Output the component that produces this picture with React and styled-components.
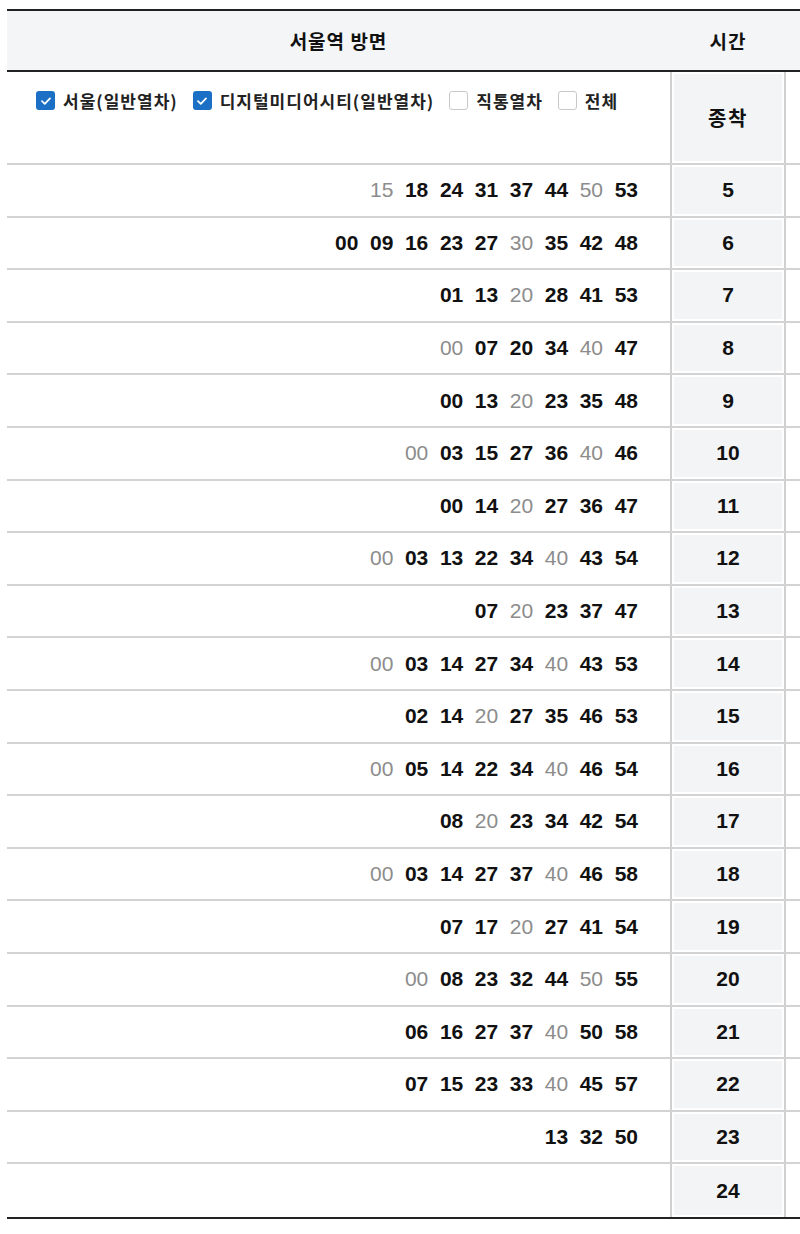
import React from "react";
import styled, { createGlobalStyle } from "styled-components";

const GlobalStyle = createGlobalStyle`
  html, body {
    margin: 0;
    padding: 0;
    background: #fff;
    overflow: hidden;
  }
  body {
    font-family: "Noto Sans CJK KR", "Liberation Sans", sans-serif;
    color: #111;
  }
`;

const COLS = "663px 116px 1fr";

const Table = styled.div`
  width: 1000px;
  margin: 9px 0 0 7px;
  border-top: 2px solid #222;
  border-bottom: 2px solid #222;
`;

const HeadRow = styled.div`
  display: grid;
  grid-template-columns: ${COLS};
  height: 59px;
  background: #f4f5f7;
  border-bottom: 2px solid #222;
`;

const HeadCell = styled.div`
  display: flex;
  align-items: center;
  justify-content: center;
  font-size: 19px;
  font-weight: 700;
  letter-spacing: 1px;
  color: #111;
`;

const Row = styled.div`
  display: grid;
  grid-template-columns: ${COLS};
  box-sizing: border-box;
  height: ${(p) => p.$height}px;
  border-bottom: ${(p) => (p.$last ? "none" : "2px solid #d3d3d3")};
`;

const FilterCell = styled.div`
  display: flex;
  align-items: flex-start;
  gap: 15px;
  padding: 16px 0 0 29px;
`;

const Filter = styled.label`
  display: flex;
  align-items: center;
  gap: 8px;
  font-size: 17px;
  font-weight: 700;
  color: #222;
  letter-spacing: 1px;
`;

const Box = styled.span`
  display: flex;
  align-items: center;
  justify-content: center;
  width: 19px;
  height: 19px;
  box-sizing: border-box;
  border-radius: 3px;
  background: ${(p) => (p.$on ? "#1b6fc4" : "#fff")};
  border: ${(p) => (p.$on ? "none" : "1.5px solid #c9c9c9")};
`;

const Minutes = styled.div`
  display: flex;
  justify-content: flex-end;
  align-items: center;
  gap: 11.6px;
  padding-right: 32px;
  font-family: "Liberation Sans", sans-serif;
  font-size: 21px;
`;

const Min = styled.span`
  font-weight: ${(p) => (p.$dim ? 400 : 700)};
  color: ${(p) => (p.$dim ? "#8c8c8c" : "#111")};
`;

const HourCell = styled.div`
  display: flex;
  align-items: center;
  justify-content: center;
  border-left: 2px solid #d0d0d0;
  border-right: 2px solid #d0d0d0;
  background: #f3f4f6;
  box-shadow: inset 0 0 0 2px #fff;
  font-family: "Liberation Sans", sans-serif;
  font-size: 21px;
  font-weight: 700;
  color: #111;
`;

const HourLabel = styled(HourCell)`
  font-family: "Noto Sans CJK KR", sans-serif;
  font-size: 20px;
  letter-spacing: 1.5px;
`;

const Check = () => (
  <svg width="12" height="12" viewBox="0 0 12 12">
    <path d="M2 6.2 L4.8 8.8 L10 3.4" fill="none" stroke="#fff" strokeWidth="1.8" strokeLinecap="round" strokeLinejoin="round" />
  </svg>
);

const filters = [
  { label: "서울(일반열차)", on: true },
  { label: "디지털미디어시티(일반열차)", on: true },
  { label: "직통열차", on: false },
  { label: "전체", on: false },
];

// "g" suffix = dimmed departure
const timetable = [
  [5, "15g 18 24 31 37 44 50g 53"],
  [6, "00 09 16 23 27 30g 35 42 48"],
  [7, "01 13 20g 28 41 53"],
  [8, "00g 07 20 34 40g 47"],
  [9, "00 13 20g 23 35 48"],
  [10, "00g 03 15 27 36 40g 46"],
  [11, "00 14 20g 27 36 47"],
  [12, "00g 03 13 22 34 40g 43 54"],
  [13, "07 20g 23 37 47"],
  [14, "00g 03 14 27 34 40g 43 53"],
  [15, "02 14 20g 27 35 46 53"],
  [16, "00g 05 14 22 34 40g 46 54"],
  [17, "08 20g 23 34 42 54"],
  [18, "00g 03 14 27 37 40g 46 58"],
  [19, "07 17 20g 27 41 54"],
  [20, "00g 08 23 32 44 50g 55"],
  [21, "06 16 27 37 40g 50 58"],
  [22, "07 15 23 33 40g 45 57"],
  [23, "13 32 50"],
  [24, ""],
];

export default function App() {
  return (
    <>
      <GlobalStyle />
      <Table>
        <HeadRow>
          <HeadCell>서울역 방면</HeadCell>
          <HeadCell>시간</HeadCell>
          <HeadCell />
        </HeadRow>
        <Row $height={93}>
          <FilterCell>
            {filters.map((f) => (
              <Filter key={f.label}>
                <Box $on={f.on}>{f.on && <Check />}</Box>
                {f.label}
              </Filter>
            ))}
          </FilterCell>
          <HourLabel>종착</HourLabel>
          <div />
        </Row>
        {timetable.map(([hour, mins], i) => (
          <Row key={hour} $height={52.6} $last={i === timetable.length - 1}>
            <Minutes>
              {mins
                .split(" ")
                .filter(Boolean)
                .map((m, j) => (
                  <Min key={j} $dim={m.endsWith("g")}>
                    {m.replace("g", "")}
                  </Min>
                ))}
            </Minutes>
            <HourCell>{hour}</HourCell>
            <div />
          </Row>
        ))}
      </Table>
    </>
  );
}
